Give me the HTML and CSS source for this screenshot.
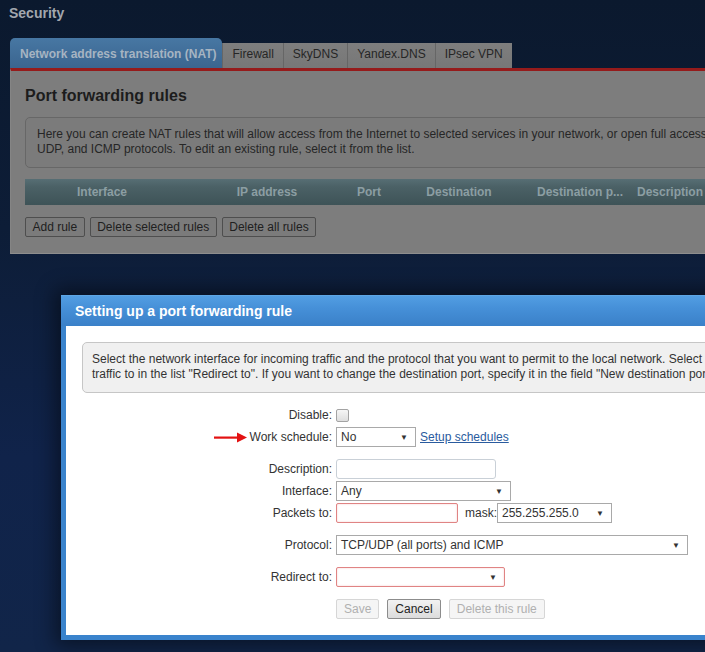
FILE: index.html
```html
<!DOCTYPE html>
<html lang="en">
<head>
<meta charset="utf-8">
<title>Security - Port forwarding</title>
<link rel="stylesheet" href="styles.css">
</head>
<body>
<div class="page">
  <h1 class="page-title">Security</h1>
  <div class="tabs">
    <div class="tab tab-active">Network address translation (NAT)</div>
    <div class="tab">Firewall</div>
    <div class="tab">SkyDNS</div>
    <div class="tab">Yandex.DNS</div>
    <div class="tab">IPsec VPN</div>
  </div>
  <div class="panel">
    <h2 class="panel-title">Port forwarding rules</h2>
    <div class="note">Here you can create NAT rules that will allow access from the Internet to selected services in your network, or open full access to a device for TCP,<br>UDP, and ICMP protocols. To edit an existing rule, select it from the list.</div>
    <div class="grid-head">
      <div>Interface</div>
      <div>IP address</div>
      <div>Port</div>
      <div>Destination</div>
      <div>Destination p...</div>
      <div>Description</div>
    </div>
    <div class="actions">
      <button class="btn">Add rule</button>
      <button class="btn">Delete selected rules</button>
      <button class="btn">Delete all rules</button>
    </div>
  </div>
</div>

<div class="dialog">
  <div class="dialog-head">Setting up a port forwarding rule</div>
  <div class="dialog-body">
    <div class="dlg-note">Select the network interface for incoming traffic and the protocol that you want to permit to the local network. Select the device to redirect the<br>traffic to in the list "Redirect to". If you want to change the destination port, specify it in the field "New destination port".</div>

    <div class="row gap">
      <label class="lbl">Disable:</label>
      <div class="ctl"><input type="checkbox" class="check"></div>
    </div>
    <div class="row">
      <label class="lbl"><svg class="arrow" width="33" height="11" viewBox="0 0 33 11"><rect x="0" y="4.5" width="25" height="2.2" fill="#e31212"/><polygon points="23,0.5 33,5.6 23,10.5" fill="#e31212"/></svg>Work schedule:</label>
      <div class="ctl"><span class="select w-sched">No<span class="caret">▼</span></span><a class="link" href="#">Setup schedules</a></div>
    </div>
    <div class="row gap">
      <label class="lbl">Description:</label>
      <div class="ctl"><span class="input w-desc"></span></div>
    </div>
    <div class="row">
      <label class="lbl">Interface:</label>
      <div class="ctl"><span class="select w-iface">Any<span class="caret">▼</span></span></div>
    </div>
    <div class="row">
      <label class="lbl">Packets to:</label>
      <div class="ctl"><span class="input invalid w-packets"></span><span class="mask-lbl">mask:</span><span class="select w-mask">255.255.255.0<span class="caret">▼</span></span></div>
    </div>
    <div class="row gap">
      <label class="lbl">Protocol:</label>
      <div class="ctl"><span class="select w-proto">TCP/UDP (all ports) and ICMP<span class="caret">▼</span></span></div>
    </div>
    <div class="row gap">
      <label class="lbl">Redirect to:</label>
      <div class="ctl"><span class="select invalid w-redirect"><span></span><span class="caret">▼</span></span></div>
    </div>
    <div class="row gap">
      <span></span>
      <div class="ctl buttons">
        <button class="dbtn" disabled>Save</button>
        <button class="dbtn primary">Cancel</button>
        <button class="dbtn" disabled>Delete this rule</button>
      </div>
    </div>
  </div>
</div>
</body>
</html>
```
FILE: styles.css
```css
* { box-sizing: border-box; }

html, body {
  margin: 0;
  overflow: hidden;
}

body {
  position: relative;
  width: 705px;
  height: 652px;
  font-family: "Liberation Sans", Arial, sans-serif;
  font-size: 12px;
  background: linear-gradient(180deg, #0b192e 0%, #0d1d37 35%, #10234a 70%, #112549 100%);
}

.page {
  width: 800px;
  padding: 5px 0 0 9px;
}

.page-title {
  margin: 0;
  font-size: 14px;
  line-height: 16px;
  font-weight: bold;
  color: #a2a7ae;
}

.tabs {
  display: flex;
  align-items: flex-end;
  margin: 17px 0 0 1px;
}

.tab {
  padding: 4px 9px 7px;
  line-height: 14px;
  background: linear-gradient(180deg, #7e7e7e, #777777);
  color: #262626;
  border-left: 1px solid #666666;
  white-space: nowrap;
}

.tab-active {
  padding: 9px 6px 7px 10px;
  background: linear-gradient(180deg, #4777a3 0%, #3b658f 100%);
  color: #a6b4c2;
  font-weight: bold;
  border-left: 0;
  border-radius: 5px 5px 0 0;
}

.panel {
  margin-left: 1px;
  background: #7d7d7d;
  border-top: 3px solid #951b1b;
  border-left: 1px solid #858585;
  border-bottom: 1px solid #8e8e8e;
  padding: 15px 15px 16px 14px;
}

.panel-title {
  margin: 0 0 11px;
  font-size: 16px;
  line-height: 20px;
  font-weight: bold;
  color: #1c1c1c;
}

.note {
  border: 1px solid #676767;
  border-radius: 5px;
  background: #7b7b7b;
  padding: 9px 11px 10px;
  line-height: 15px;
  color: #262626;
  white-space: nowrap;
  overflow: hidden;
}

.grid-head {
  display: grid;
  grid-template-columns: 154px 176px 28px 152px 90px 90px;
  margin-top: 11px;
  height: 26px;
  line-height: 26px;
  background: linear-gradient(180deg, #576e74 0%, #4b6166 30%, #3e5357 100%);
  color: #8c9ea3;
  font-weight: bold;
  text-align: center;
  white-space: nowrap;
}

.actions {
  display: flex;
  gap: 5px;
  margin-top: 12px;
}

.btn {
  height: 20px;
  padding: 0 6.5px;
  font: 12px "Liberation Sans", Arial, sans-serif;
  color: #202020;
  background: #7b7b7b;
  border: 1px solid #4e4e4e;
  border-radius: 2px;
}

/* Dialog */
.dialog {
  position: absolute;
  left: 61px;
  top: 295px;
  width: 700px;
  background: #3a83cc;
  padding: 0 5px 5px;
  box-shadow: 0 0 18px 6px rgba(0, 0, 0, 0.45);
}

.dialog-head {
  margin: 0 -5px;
  height: 31px;
  line-height: 31px;
  padding-left: 14px;
  font-size: 14px;
  font-weight: bold;
  color: #ffffff;
  background: linear-gradient(180deg, #529ee2 0%, #4690d8 40%, #3a80c8 100%);
  border-top: 1px solid #5ea6e4;
}

.dialog-body {
  background: #ffffff;
  padding: 16px 16px 16px;
}

.dlg-note {
  border: 1px solid #c6c6c6;
  border-radius: 5px;
  background: #f0f0f0;
  padding: 9px 9px 10px;
  line-height: 15px;
  color: #333333;
  white-space: nowrap;
  overflow: hidden;
}

.row {
  display: grid;
  grid-template-columns: 250px 1fr;
  column-gap: 4px;
  align-items: center;
  height: 20px;
  margin-top: 2px;
}

.row.gap { margin-top: 12px; }

.lbl {
  display: flex;
  align-items: center;
  justify-content: flex-end;
  color: #333333;
  white-space: nowrap;
}

.arrow { margin-right: 3px; }

.ctl {
  display: flex;
  align-items: center;
  height: 20px;
}

.check {
  appearance: none;
  -webkit-appearance: none;
  margin: 0;
  width: 13px;
  height: 13px;
  border: 1px solid #a3a3a3;
  border-radius: 2px;
  background: linear-gradient(180deg, #f6f6f6, #dedede);
}

.select {
  display: inline-flex;
  align-items: center;
  justify-content: space-between;
  height: 20px;
  padding: 0 7px 0 4px;
  border: 1px solid #a9a9a9;
  background: #ffffff;
  color: #333333;
  white-space: nowrap;
}

.caret {
  font-size: 8px;
  color: #333333;
}

.input {
  display: inline-block;
  height: 20px;
  border: 1px solid #c9d0d7;
  border-radius: 3px;
  background: #ffffff;
}

.invalid {
  border-color: #e08484;
  border-radius: 2px;
  box-shadow: inset 0 0 2px rgba(220, 60, 60, 0.25);
}

.w-sched { width: 80px; }
.w-iface { width: 175px; }
.w-mask { width: 115px; }
.w-proto { width: 352px; }
.w-redirect { width: 169px; }
.w-desc { width: 160px; }
.w-packets { width: 122px; }

.mask-lbl {
  margin-left: 7px;
  color: #333333;
}

.link {
  margin-left: 4px;
  color: #2a5b9e;
  text-decoration: underline;
}

.buttons { gap: 8px; }

.dbtn {
  height: 20px;
  padding: 0 7px;
  font: 12px "Liberation Sans", Arial, sans-serif;
  color: #222222;
  background: linear-gradient(180deg, #f2f2f2, #dcdcdc);
  border: 1px solid #8c8c8c;
  border-radius: 2px;
}

.dbtn:disabled {
  color: #b0b0b0;
  background: #f5f5f5;
  border-color: #d6d6d6;
}
```
